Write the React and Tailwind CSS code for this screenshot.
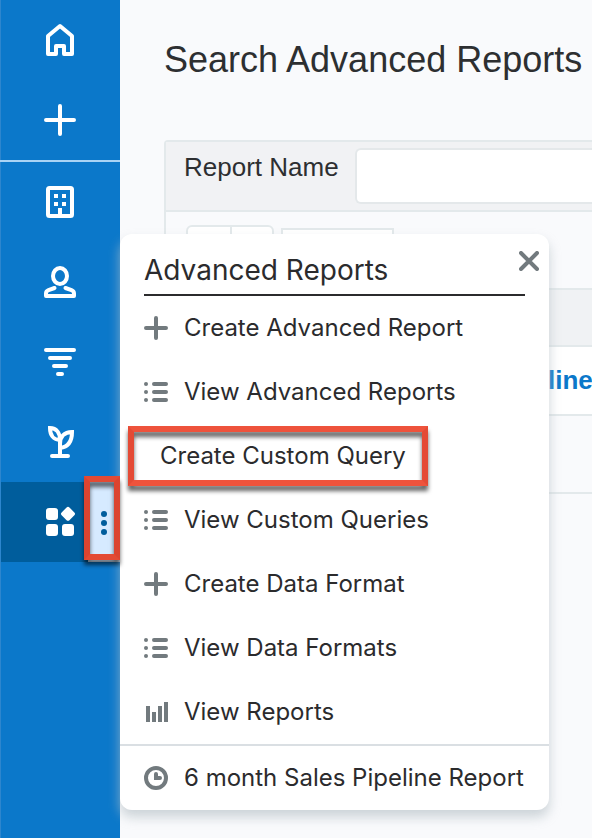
const navItems = [
  {
    id: "company",
    icon: (
      <>
        <rect x="4" y="2" width="24" height="28" rx="1.5" />
        <path
          d="M10 8h4v4h-4zM18 8h4v4h-4zM10 16h4v4h-4zM18 16h4v4h-4zM14 22h4v6h-4z"
          fill="currentColor"
          stroke="none"
        />
      </>
    ),
  },
  {
    id: "contact",
    icon: (
      <>
        <ellipse cx="16" cy="10" rx="7" ry="8" />
        <path d="M10.5 22l-6 2.2Q2 25.2 2 27.5V30h28v-2.5q0-2.3-2.5-3.3l-6-2.2" />
      </>
    ),
  },
  {
    id: "funnel",
    icon: <path d="M2 4h28M6 12h20M10 20h12M14 28h4" />,
  },
  {
    id: "sprout",
    icon: (
      <path
        d="M16 30V14C16 7 12.500 2 6 2c0 7 3.500 12 10 12M16 22V18C16 11 20 6 28 6c0 9-4 15-12 16M8 30h16"
        strokeLinejoin="miter"
      />
    ),
  },
];

const menuItems = [
  { label: "Create Advanced Report", icon: "plus" },
  { label: "View Advanced Reports", icon: "list" },
  { label: "Create Custom Query", icon: null },
  { label: "View Custom Queries", icon: "list" },
  { label: "Create Data Format", icon: "plus" },
  { label: "View Data Formats", icon: "list" },
  { label: "View Reports", icon: "chart" },
];

const NavIcon = ({ children }) => (
  <svg
    className="size-8 shrink-0 overflow-visible"
    viewBox="0 0 32 32"
    fill="none"
    stroke="currentColor"
    strokeWidth="4"
    strokeLinecap="round"
    strokeLinejoin="round"
  >
    {children}
  </svg>
);

const MenuIcon = ({ name }) => (
  <svg
    className="size-6 shrink-0 text-[#727a7e]"
    viewBox="0 0 24 24"
    fill="none"
    stroke="currentColor"
    strokeWidth="4"
    strokeLinecap="round"
  >
    {name === "plus" && <path d="M12 2v20M2 12h20" />}
    {name === "list" && (
      <>
        <path d="M10 4h12M10 12h12M10 20h12" />
        <g fill="currentColor" stroke="none">
          <circle cx="2" cy="4" r="2" />
          <circle cx="2" cy="12" r="2" />
          <circle cx="2" cy="20" r="2" />
        </g>
      </>
    )}
    {name === "chart" && (
      <path
        d="M2 6h4v16H2zM8 12h4v10H8zM14 6h4v16h-4zM20 2h4v20h-4z"
        fill="currentColor"
        stroke="none"
      />
    )}
    {name === "clock" && (
      <>
        <circle cx="12" cy="12" r="10" />
        <path d="M12 8v4h4" strokeLinejoin="miter" />
      </>
    )}
  </svg>
);

const Sidebar = () => (
  <nav className="w-[120px] h-full shrink-0 flex flex-col bg-[#0b78ca] border-l border-[#2d86ce] text-white">
    <div className="h-20 pr-px flex items-center justify-center">
      <NavIcon>
        <path d="M4 30V12L16 2l12 10v18h-8v-8h-8v8z" />
      </NavIcon>
    </div>
    <div className="h-20 pr-px flex items-center justify-center">
      <NavIcon>
        <path d="M16 2v28M2 16h28" />
      </NavIcon>
    </div>
    <div className="h-0.5 -ml-px bg-[#a9d3f5]" />
    {navItems.map((item) => (
      <div key={item.id} className="h-20 pr-px flex items-center justify-center">
        <NavIcon>{item.icon}</NavIcon>
      </div>
    ))}
    <div className="h-20 flex bg-[#005d9c]">
      <div className="w-[87px] pl-[43px] flex items-center">
        <svg className="size-8" viewBox="0 0 32 32" fill="currentColor">
          <rect x="2" y="2" width="12" height="12" rx="3" />
          <rect x="2" y="18" width="12" height="12" rx="3" />
          <rect x="18" y="18" width="12" height="12" rx="3" />
          <rect x="18.500" y="2.300" width="11" height="11" rx="2" transform="rotate(45 24 7.800)" />
        </svg>
      </div>
      <div className="w-8 flex items-center justify-center bg-[#d6eaff]">
        <svg className="w-2 h-6 mt-0.5 text-[#005d9c]" viewBox="0 0 8 24" fill="currentColor">
          <circle cx="4" cy="3" r="3" />
          <circle cx="4" cy="12" r="3" />
          <circle cx="4" cy="21" r="3" />
        </svg>
      </div>
    </div>
  </nav>
);

const SearchPage = () => (
  <main className="flex-1 min-w-0 h-full pl-11 flex flex-col overflow-hidden font-['Liberation_Sans',sans-serif] text-[#2d2f31]">
    <h1 className="h-[140px] shrink-0 pt-[39px] text-[36px] leading-[42px] whitespace-nowrap">
      Search Advanced Reports
    </h1>
    <section className="border-l-2 border-t-2 border-[#e3e9eb] rounded-tl">
      <div className="h-[70px] pl-[18px] pt-1.5 flex border-b-2 border-[#e3e9eb] bg-[#f1f2f4]">
        <label className="w-[171px] shrink-0 pt-1 text-[26px] leading-[30px] whitespace-nowrap">
          Report Name
        </label>
        <div className="h-14 flex-1 bg-white border-2 border-r-0 border-[#e4e8ea] rounded-l-md" />
      </div>
      <div className="h-[76px] pl-5 pt-[13px] flex gap-[7px]">
        <div className="w-[88px] h-12 flex border-2 border-[#e3e9eb] rounded-md bg-white">
          <div className="w-11 border-r-2 border-[#e3e9eb]" />
        </div>
        <div className="w-[113px] h-12 mt-[3px] border-2 border-[#e3e9eb] bg-white" />
      </div>
      <div className="h-[59px] border-y-2 border-[#e3e9eb] bg-[#f0f2f4]" />
      <div className="h-[69px] pl-[382px] flex items-center border-b-2 border-[#e3e9eb] bg-white text-[26px] font-bold text-[#0b78ca]">
        line
      </div>
      <div className="h-[78px] border-b-2 border-[#e3e9eb]" />
    </section>
  </main>
);

const ReportsMenu = () => (
  <div className="absolute left-[120px] top-[234px] w-[429px] h-[576px] flex flex-col rounded-xl bg-white text-[#2b2b2d] shadow-[0_7px_12px_rgba(184,194,199,0.7)] font-['Inter',sans-serif] text-[24px] whitespace-nowrap">
    <div className="h-[62px] ml-6 mr-[10px] flex justify-between">
      <h2 className="w-[381px] shrink-0 pt-[18px] border-b-2 border-[#2b2b2d] text-[28px] leading-9">
        Advanced Reports
      </h2>
      <svg
        className="size-5 -ml-1.5 mt-[17px] shrink-0 text-[#727a7e]"
        viewBox="0 0 20 20"
        stroke="currentColor"
        strokeWidth="4"
        strokeLinecap="round"
      >
        <path d="M2 2l16 16M18 2L2 18" />
      </svg>
    </div>
    <ul>
      {menuItems.map(({ label, icon }) => (
        <li key={label} className="h-16 pl-6 flex items-center gap-4">
          {icon ? <MenuIcon name={icon} /> : <span className="w-0" />}
          {label}
        </li>
      ))}
    </ul>
    <div className="h-[66px] pl-6 flex items-center gap-4 border-t-2 border-[#dadfe3]">
      <MenuIcon name="clock" />
      6 month Sales Pipeline Report
    </div>
  </div>
);

const App = () => (
  <div className="relative w-[592px] h-[838px] flex overflow-hidden bg-[#f9fafc]">
    <Sidebar />
    <SearchPage />
    <ReportsMenu />
    <div className="absolute left-[84px] top-[476px] w-9 h-[84px] border-[6px] border-x-[#dc4430] border-y-[#e34a34] drop-shadow-[0_5px_2px_rgba(0,0,0,0.6)]" />
    <div className="absolute left-[128px] top-[426px] w-[300px] h-[60px] border-[6px] border-x-[#e44a35] border-y-[#ee533c] drop-shadow-[0_5px_2px_rgba(0,0,0,0.6)]" />
  </div>
);

export default App;
